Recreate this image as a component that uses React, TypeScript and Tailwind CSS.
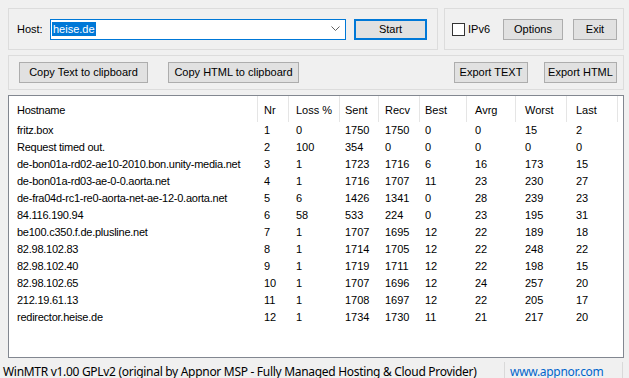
import { useState } from "react";

const hops = [
  ["fritz.box", 1, 0, 1750, 1750, 0, 0, 15, 2],
  ["Request timed out.", 2, 100, 354, 0, 0, 0, 0, 0],
  ["de-bon01a-rd02-ae10-2010.bon.unity-media.net", 3, 1, 1723, 1716, 6, 16, 173, 15],
  ["de-bon01a-rd03-ae-0-0.aorta.net", 4, 1, 1716, 1707, 11, 23, 230, 27],
  ["de-fra04d-rc1-re0-aorta-net-ae-12-0.aorta.net", 5, 6, 1426, 1341, 0, 28, 239, 23],
  ["84.116.190.94", 6, 58, 533, 224, 0, 23, 195, 31],
  ["be100.c350.f.de.plusline.net", 7, 1, 1707, 1695, 12, 22, 189, 18],
  ["82.98.102.83", 8, 1, 1714, 1705, 12, 22, 248, 22],
  ["82.98.102.40", 9, 1, 1719, 1711, 12, 22, 198, 15],
  ["82.98.102.65", 10, 1, 1707, 1696, 12, 24, 257, 20],
  ["212.19.61.13", 11, 1, 1708, 1697, 12, 22, 205, 17],
  ["redirector.heise.de", 12, 1, 1734, 1730, 11, 21, 217, 20],
];

const cols = [
  { name: "Hostname", w: "w-[249px]", pad: "pl-[8px] tracking-[-0.25px]" },
  { name: "Nr", w: "w-[31px]", pad: "pl-[6px]" },
  { name: "Loss %", w: "w-[51px]", pad: "pl-[7px]" },
  { name: "Sent", w: "w-[39px]", pad: "pl-[5px]" },
  { name: "Recv", w: "w-[41px]", pad: "pl-[6px]" },
  { name: "Best", w: "w-[47px]", pad: "pl-[5px]" },
  { name: "Avrg", w: "w-[49px]", pad: "pl-[8px]" },
  { name: "Worst", w: "w-[51px]", pad: "pl-[9px]" },
  { name: "Last", w: "w-[51px]", pad: "pl-[9px]" },
];

function Btn({ label, className }: { label: string; className: string }) {
  return (
    <button
      className={`h-[21px] bg-[#e1e1e1] border border-[#adadad] text-[11px] text-black leading-none ${className}`}
    >
      {label}
    </button>
  );
}

export default function App() {
  const [host, setHost] = useState("heise.de");
  const [ipv6, setIpv6] = useState(false);

  return (
    <div className="w-[629px] h-[378px] overflow-hidden bg-[#f0f0f0] flex flex-col font-['Liberation_Sans',Arial,sans-serif] text-[11px] text-black">
      <div className="flex shrink-0 pt-[8px] pl-[8px] gap-[6px]">
        <div className="w-[430px] h-[42px] border border-[#dcdcdc] flex items-center pl-[8px]">
          <span className="w-[33px]">Host:</span>
          <div className="w-[296px] h-[21px] border border-[#0078d7] bg-white flex items-center pl-[1px] pr-[4px]">
            <span className="bg-[#0078d7] text-white px-[1px] leading-[14px]">{host}</span>
            <input className="hidden" value={host} onChange={(e) => setHost(e.target.value)} />
            <span className="flex-1" />
            <svg width="9" height="6" viewBox="0 0 9 6" className="mr-[1px]">
              <path d="M0.5 0.5 L4.5 4.5 L8.5 0.5" fill="none" stroke="#606060" strokeWidth="1" />
            </svg>
          </div>
          <button className="ml-[8px] w-[73px] h-[21px] bg-[#e1e1e1] border-2 border-[#0078d7] text-[11px] leading-none">
            Start
          </button>
        </div>
        <div className="w-[180px] h-[42px] border border-[#dcdcdc] flex items-center pl-[7px]">
          <button
            onClick={() => setIpv6(!ipv6)}
            className="w-[13px] h-[13px] border border-[#333333] bg-white"
          />
          <span className="ml-[3px] w-[35px]">IPv6</span>
          <Btn label="Options" className="w-[60px]" />
          <Btn label="Exit" className="ml-[10px] w-[44px]" />
        </div>
      </div>

      <div className="ml-[8px] mt-[5px] shrink-0 w-[616px] h-[35px] border border-[#dcdcdc] flex items-center pl-[10px] pr-[6px]">
        <Btn label="Copy Text to clipboard" className="w-[129px]" />
        <Btn label="Copy HTML to clipboard" className="ml-[20px] w-[131px]" />
        <span className="flex-1" />
        <Btn label="Export TEXT" className="w-[74px]" />
        <Btn label="Export HTML" className="ml-[16px] w-[73px]" />
      </div>

      <div className="ml-[8px] mt-[5px] w-[616px] h-[263px] shrink-0 border border-[#828790] bg-white flex flex-col">
        <div className="flex h-[26px]">
          {cols.map((c) => (
            <div
              key={c.name}
              className={`${c.w} ${c.pad} shrink-0 h-full flex items-center pt-[3px] border-r border-[#e5e5e5]`}
            >
              {c.name}
            </div>
          ))}
        </div>
        {hops.map((row) => (
          <div key={row[1] as number} className="flex h-[17px] items-center">
            {row.map((v, i) => (
              <div key={i} className={`${cols[i].w} ${cols[i].pad} shrink-0 whitespace-nowrap`}>
                {v}
              </div>
            ))}
          </div>
        ))}
      </div>

      <div className="mt-[4px] h-[20px] shrink-0 flex items-center font-['Noto_Sans',sans-serif] text-[12px] tracking-[-0.3px]">
        <span className="pl-[3px] w-[504px] whitespace-nowrap">
          WinMTR v1.00 GPLv2 (original by Appnor MSP - Fully Managed Hosting &amp; Cloud Provider)
        </span>
        <span className="h-full border-l border-[#d9d9d9] pl-[5px] w-[118px] text-[#0066cc] flex items-center">
          www.appnor.com
        </span>
        <span className="h-full border-l border-[#d9d9d9]" />
      </div>
    </div>
  );
}
